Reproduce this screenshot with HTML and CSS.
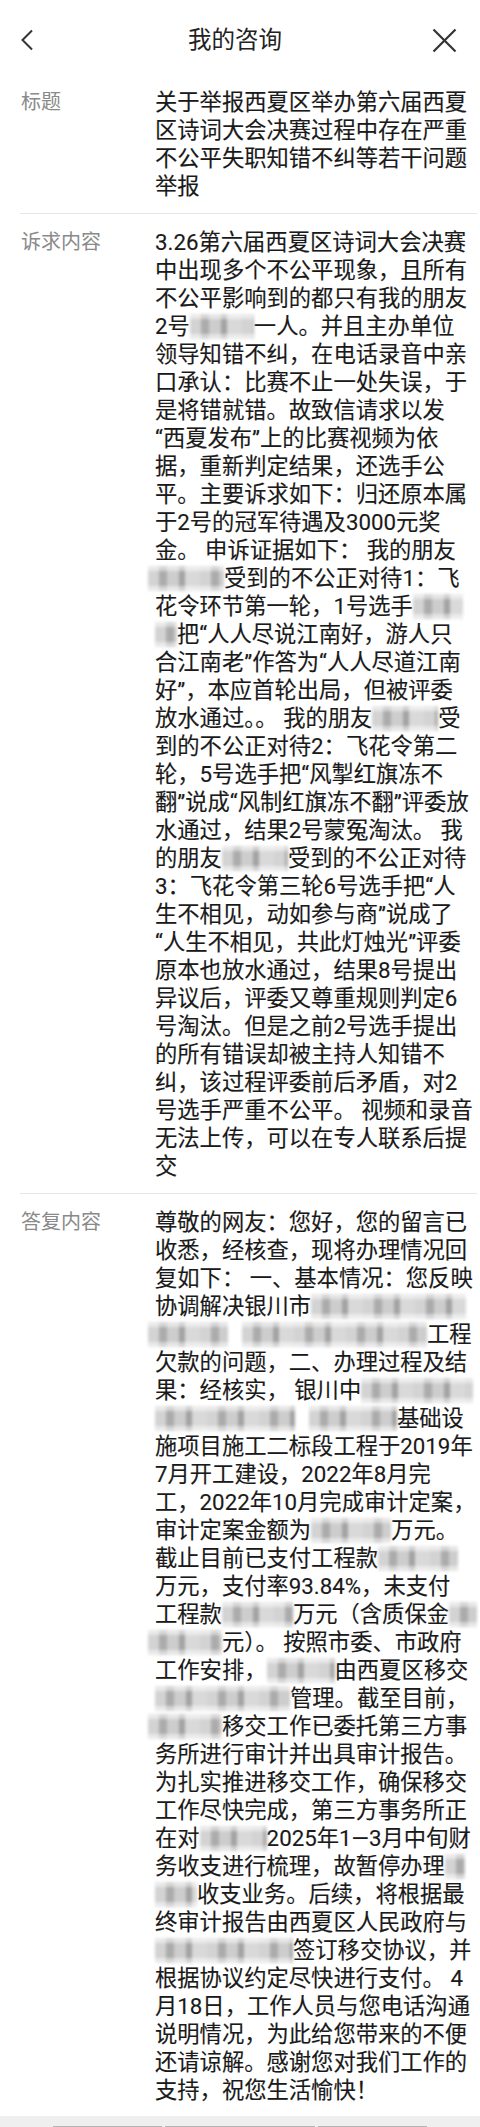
FILE: index.html
```html
<!DOCTYPE html>
<html lang="zh-CN">
<head>
<meta charset="utf-8">
<title>我的咨询</title>
<link rel="stylesheet" href="styles.css">
</head>
<body>
<header class="topbar">
  <svg class="icon-back" width="14" height="22" viewBox="0 0 14 22"><path d="M12 1.5 L2.5 11 L12 20.5" fill="none" stroke="#333" stroke-width="2"/></svg>
  <h1 class="title">我的咨询</h1>
  <svg class="icon-close" width="25" height="25" viewBox="0 0 25 25"><path d="M1.5 1.5 L23.5 23.5 M23.5 1.5 L1.5 23.5" fill="none" stroke="#333" stroke-width="2.2"/></svg>
</header>

<main class="detail">
  <section class="row">
    <div class="label">标题</div>
    <div class="value">关于举报西夏区举办第六届西夏<br>区诗词大会决赛过程中存在严重<br>不公平失职知错不纠等若干问题<br>举报</div>
  </section>

  <section class="row">
    <div class="label">诉求内容</div>
    <div class="value">3.26第六届西夏区诗词大会决赛<br>中出现多个不公平现象，且所有<br>不公平影响到的都只有我的朋友<br>2号<span class="mosaic" style="width:64px"></span>一人。并且主办单位<br>领导知错不纠，在电话录音中亲<br>口承认：比赛不止一处失误，于<br>是将错就错。故致信请求以发<br>“西夏发布”上的比赛视频为依<br>据，重新判定结果，还选手公<br>平。主要诉求如下：归还原本属<br>于2号的冠军待遇及3000元奖<br>金。 申诉证据如下： 我的朋友<br><span class="mosaic shift" style="width:76px"></span>受到的不公正对待1：飞<br>花令环节第一轮，1号选手<span class="mosaic" style="width:50px"></span><br><span class="mosaic" style="width:22px"></span>把“人人尽说江南好，游人只<br>合江南老”作答为“人人尽道江南<br>好”，本应首轮出局，但被评委<br>放水通过。。 我的朋友<span class="mosaic" style="width:66px"></span>受<br>到的不公正对待2：飞花令第二<br>轮，5号选手把“风掣红旗冻不<br>翻”说成“风制红旗冻不翻”评委放<br>水通过，结果2号蒙冤淘汰。 我<br>的朋友<span class="mosaic" style="width:66px"></span>受到的不公正对待<br>3：飞花令第三轮6号选手把“人<br>生不相见，动如参与商”说成了<br>“人生不相见，共此灯烛光”评委<br>原本也放水通过，结果8号提出<br>异议后，评委又尊重规则判定6<br>号淘汰。但是之前2号选手提出<br>的所有错误却被主持人知错不<br>纠，该过程评委前后矛盾，对2<br>号选手严重不公平。 视频和录音<br>无法上传，可以在专人联系后提<br>交</div>
  </section>

  <section class="row last">
    <div class="label">答复内容</div>
    <div class="value">尊敬的网友：您好，您的留言已<br>收悉，经核查，现将办理情况回<br>复如下： 一、基本情况：您反映<br>协调解决银川市<span class="mosaic" style="width:155px"></span><br><span class="mosaic shift" style="width:80px"></span><span class="gap"></span><span class="mosaic" style="width:185px"></span>工程<br>欠款的问题，二、办理过程及结<br>果：经核实， 银川中<span class="mosaic" style="width:112px"></span><br><span class="mosaic" style="width:140px"></span><span class="gap"></span><span class="mosaic" style="width:88px"></span>基础设<br>施项目施工二标段工程于2019年<br>7月开工建设，2022年8月完<br>工，2022年10月完成审计定案，<br>审计定案金额为<span class="mosaic" style="width:80px"></span>万元。<br>截止目前已支付工程款<span class="mosaic" style="width:80px"></span><br>万元，支付率93.84%，未支付<br>工程款<span class="mosaic" style="width:71px"></span>万元（含质保金<span class="mosaic" style="width:28px"></span><br><span class="mosaic shift" style="width:74px"></span>元）。 按照市委、市政府<br>工作安排，<span class="mosaic" style="width:68px"></span>由西夏区移交<br><span class="mosaic" style="width:135px"></span>管理。截至目前，<br><span class="mosaic shift" style="width:74px"></span>移交工作已委托第三方事<br>务所进行审计并出具审计报告。<br>为扎实推进移交工作，确保移交<br>工作尽快完成，第三方事务所正<br>在对<span class="mosaic" style="width:67px"></span>2025年1—3月中旬财<br>务收支进行梳理，故暂停办理<span class="mosaic" style="width:20px"></span><br><span class="mosaic" style="width:42px"></span>收支业务。后续，将根据最<br>终审计报告由西夏区人民政府与<br><span class="mosaic" style="width:138px"></span>签订移交协议，并<br>根据协议约定尽快进行支付。 4<br>月18日，工作人员与您电话沟通<br>说明情况，为此给您带来的不便<br>还请谅解。感谢您对我们工作的<br>支持，祝您生活愉快！</div>
  </section>
</main>

<footer class="bottom">
  <span class="bar bar-a"></span>
  <span class="bar bar-b"></span>
  <span class="bar bar-c"></span>
</footer>
</body>
</html>
```

FILE: styles.css
```css
html, body {
  margin: 0;
  padding: 0;
  background: #ffffff;
}

body {
  font-family: Roboto, "Noto Sans CJK SC", "Noto Sans", sans-serif;
  color: #1a1a1a;
  width: 480px;
}

.topbar {
  height: 74px;
  box-sizing: border-box;
  padding: 6px 23px 0 20px;
  display: flex;
  align-items: center;
  justify-content: space-between;
}

.icon-back,
.icon-close {
  display: block;
  flex: none;
}

.title {
  margin: 0;
  font-size: 23.5px;
  font-weight: normal;
  color: #222222;
  line-height: 30px;
  margin-left: 4px;
}

.detail {
  margin: 0 3px 0 20px;
}

.row {
  display: grid;
  grid-template-columns: 135px 1fr;
  padding: 14px 0 13px;
  border-bottom: 1px solid #e6e6e6;
}

.row.last {
  border-bottom: none;
  padding-bottom: 12px;
}

.label {
  font-size: 20px;
  line-height: 28px;
  color: #8a8a8a;
  padding-left: 1px;
}

.value {
  font-size: 22.3px;
  line-height: 28px;
  white-space: nowrap;
  color: #1a1a1a;
  -webkit-text-stroke: 0.15px #1a1a1a;
}

.mosaic {
  display: inline-block;
  height: 25px;
  vertical-align: top;
  margin-top: 2px;
  background:
    linear-gradient(180deg, rgba(255,255,255,0.5) 0 20%, rgba(255,255,255,0) 20% 80%, rgba(255,255,255,0.5) 80%),
    repeating-linear-gradient(90deg, #d3d3d3 0 11px, #ababab 11px 19px, #cdcdcd 19px 31px, #a2a2a2 31px 37px, #d9d9d9 37px 52px);
  filter: blur(1.8px);
}

.mosaic.shift {
  margin-left: -7px;
}

.gap {
  display: inline-block;
  width: 14px;
}

.bottom {
  height: 14px;
  background: #efefef;
  display: flex;
  align-items: flex-end;
  padding-left: 53px;
  gap: 3px;
}

.bar {
  display: block;
  height: 4px;
  background: #b4b4b4;
}

.bar-a { width: 109px; }
.bar-b { width: 150px; }
.bar-c { width: 109px; }
```
